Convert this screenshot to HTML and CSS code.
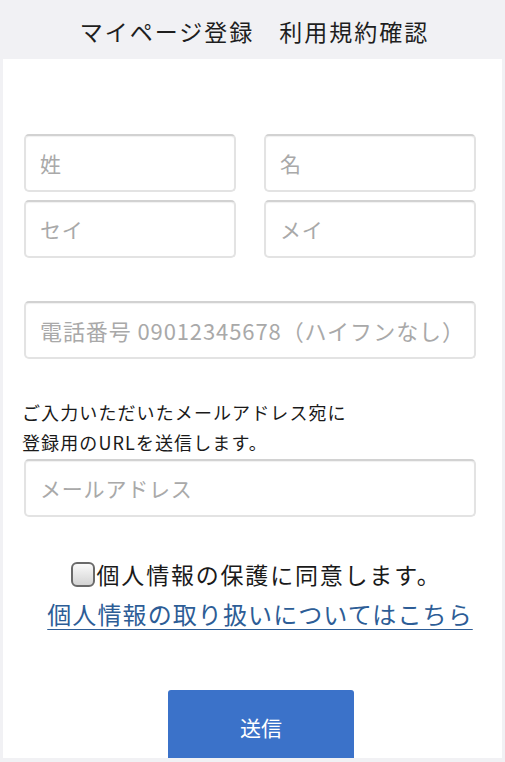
FILE: index.html
```html
<!DOCTYPE html>
<html lang="ja">
<head>
<meta charset="utf-8">
<title>マイページ登録　利用規約確認</title>
<link rel="stylesheet" href="styles.css">
</head>
<body>
<header class="topbar">マイページ登録　利用規約確認</header>
<main class="panel">
  <form class="form">
    <div class="name-grid">
      <input class="field" type="text" placeholder="姓">
      <input class="field" type="text" placeholder="名">
      <input class="field" type="text" placeholder="セイ">
      <input class="field" type="text" placeholder="メイ">
    </div>
    <input class="field field-phone" type="tel" placeholder="電話番号 09012345678（ハイフンなし）">
    <p class="note">ご入力いただいたメールアドレス宛に<br>登録用のURLを送信します。</p>
    <input class="field field-mail" type="email" placeholder="メールアドレス">
    <label class="agree"><input class="check" type="checkbox">個人情報の保護に同意します。</label>
    <div class="link-row"><a class="policy-link" href="#">個人情報の取り扱いについてはこちら</a></div>
    <div class="submit-row"><button class="submit" type="button">送信</button></div>
  </form>
</main>
</body>
</html>
```
FILE: styles.css
```css
* { box-sizing: border-box; }
html, body { margin: 0; padding: 0; }
body {
  background: #f1f1f4;
  font-family: "Noto Sans CJK JP", "Noto Sans", sans-serif;
  color: #222;
  width: 505px;
  height: 762px;
  overflow: hidden;
}
.topbar {
  height: 59px;
  display: flex;
  align-items: center;
  justify-content: center;
  font-size: 23px;
  letter-spacing: 2px;
  color: #1e1e1e;
  padding-top: 2px;
  padding-left: 4px;
}
.panel {
  background: #fff;
  margin: 0 3px;
  height: 699px;
  overflow: hidden;
  padding: 75px 26px 0 21px;
}
.form { display: flex; flex-direction: column; }
.name-grid {
  display: grid;
  grid-template-columns: 212px 212px;
  column-gap: 28px;
  row-gap: 8px;
}
.field {
  display: block;
  width: 100%;
  height: 58px;
  border: 2px solid #e3e3e3;
  border-top-color: #d2d2d2;
  border-radius: 5px;
  box-shadow: inset 0 1px 1px rgba(0,0,0,0.06);
  padding: 0 14px;
  font-family: "Noto Sans CJK JP", sans-serif;
  font-size: 21px;
  letter-spacing: 0.8px;
  color: #333;
  background: #fff;
  outline: none;
}
.field::placeholder { color: #a9a9a9; }
.field-phone { margin-top: 43px; font-size: 22px; letter-spacing: 0.9px; }
.note {
  margin: 38px 0 0 -2px;
  font-size: 18px;
  letter-spacing: 1.1px;
  line-height: 30px;
  color: #1a1a1a;
}
.field-mail { margin-top: 2px; }
.agree {
  margin-top: 40px;
  display: flex;
  align-items: center;
  justify-content: center;
  padding-left: 12px;
  font-size: 23px;
  letter-spacing: 1.8px;
  line-height: 34px;
  color: #1a1a1a;
}
.check {
  -webkit-appearance: none;
  appearance: none;
  width: 24px;
  height: 25px;
  margin: 0 2px 0 0;
  border: 2px solid #6a6a6a;
  border-radius: 6px;
  background: linear-gradient(#fafafa, #d4d4d4);
}
.link-row {
  margin-top: 6px;
  text-align: center;
  padding-left: 20px;
  line-height: 34px;
}
.policy-link {
  font-size: 24px;
  letter-spacing: 1.1px;
  color: #2d5d96;
  text-decoration: underline;
  text-underline-offset: 5px;
  text-decoration-thickness: 1px;
}
.submit-row {
  margin-top: 56px;
  display: flex;
  justify-content: center;
  padding-left: 22px;
}
.submit {
  width: 186px;
  height: 78px;
  border: none;
  border-radius: 3px 3px 0 0;
  background: #3b72c9;
  color: #fff;
  font-family: "Noto Sans CJK JP", sans-serif;
  font-size: 21px;
  padding-bottom: 6px;
}
```
